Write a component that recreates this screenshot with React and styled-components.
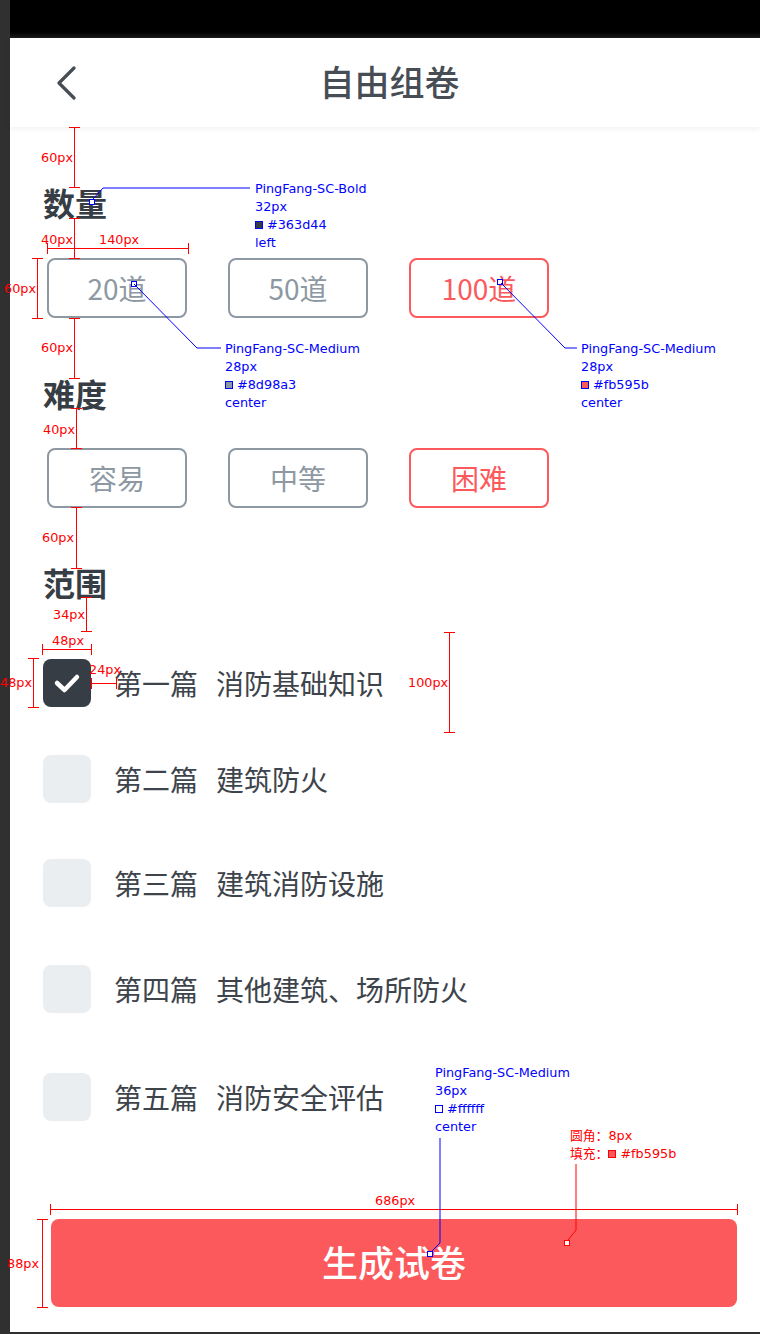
import React from "react";
import styled, { createGlobalStyle } from "styled-components";

const GlobalStyle = createGlobalStyle`
  body {
    margin: 0;
    background: #303030;
  }
  * { box-sizing: border-box; }
`;

const Frame = styled.div`
  position: relative;
  width: 760px;
  height: 1334px;
  display: flex;
  padding: 0 0 2px 10px;
  background: #303030;
  font-family: "Noto Sans CJK SC", "Noto Sans", sans-serif;
  overflow: hidden;
`;

const Page = styled.div`
  flex: 1;
  display: flex;
  flex-direction: column;
  background: #ffffff;
`;

const StatusBar = styled.div`
  height: 38px;
  background: linear-gradient(#000 0, #000 32px, #1c1c1c 38px);
`;

const Header = styled.div`
  position: relative;
  z-index: 1;
  height: 89px;
  display: grid;
  grid-template-columns: 1fr auto 1fr;
  align-items: center;
  padding: 0 46px;
  background: #fff;
  box-shadow: 0 2px 6px rgba(0, 0, 0, 0.06);
`;

const Title = styled.div`
  margin: 0 0 4px 9px;
  font-size: 35px;
  font-weight: 500;
  color: #474d55;
  line-height: 1;
`;

const Content = styled.div`
  display: flex;
  flex-direction: column;
  padding-left: 33px;
`;

const SectionTitle = styled.div`
  margin-top: ${(p) => p.$top}px;
  font-size: 32px;
  line-height: 32px;
  font-weight: 700;
  color: #363d44;
`;

const OptionRow = styled.div`
  display: flex;
  gap: 41px;
  margin: ${(p) => p.$top}px 0 0 4px;
`;

const Option = styled.div`
  width: 140px;
  height: 60px;
  display: flex;
  align-items: center;
  justify-content: center;
  border: 2px solid ${(p) => (p.$active ? "#fb595b" : "#8d98a3")};
  border-radius: 8px;
  color: ${(p) => (p.$active ? "#fb595b" : "#8d98a3")};
  font-size: 28px;
`;

const ScopeItem = styled.div`
  display: flex;
  align-items: center;
  gap: 23px;
  margin-top: ${(p) => p.$gap}px;
`;

const CheckBox = styled.div`
  width: 48px;
  height: 48px;
  flex: none;
  border-radius: 8px;
  background: ${(p) => (p.$checked ? "#363d44" : "#ebeef1")};
  display: flex;
  align-items: center;
  justify-content: center;
`;

const ScopeText = styled.div`
  font-size: 28px;
  line-height: 48px;
  color: #3d444b;
  span {
    margin-left: 18px;
  }
`;

const Submit = styled.button`
  margin: 98px 0 0 8px;
  width: 686px;
  height: 88px;
  padding: 0 0 4px;
  border: none;
  border-radius: 8px;
  background: #fb595b;
  color: #ffffff;
  font-family: inherit;
  font-size: 36px;
  font-weight: 500;
`;

/* design annotation layer */
const Overlay = styled.div`
  position: absolute;
  inset: 0;
  pointer-events: none;
`;

const Lines = styled.svg`
  position: absolute;
  left: 0;
  top: 0;
`;

const Note = styled.div`
  position: absolute;
  left: ${(p) => p.$x}px;
  top: ${(p) => p.$y}px;
  font-family: "DejaVu Sans", "Noto Sans CJK SC", sans-serif;
  font-size: 12.8px;
  line-height: 18px;
  color: ${(p) => p.$color};
  white-space: nowrap;
`;

const Swatch = styled.i`
  display: inline-block;
  width: 8px;
  height: 8px;
  margin-right: 4px;
  vertical-align: 0;
  background: ${(p) => p.$fill};
  border: 1px solid ${(p) => p.$edge};
`;

const RED = "#ff0000";
const BLUE = "#0000ff";

const counts = ["20道", "50道", "100道"];
const levels = ["容易", "中等", "困难"];

const scopes = [
  { id: 1, part: "第一篇", name: "消防基础知识", gap: 61, checked: true },
  { id: 2, part: "第二篇", name: "建筑防火", gap: 48 },
  { id: 3, part: "第三篇", name: "建筑消防设施", gap: 56 },
  { id: 4, part: "第四篇", name: "其他建筑、场所防火", gap: 58 },
  { id: 5, part: "第五篇", name: "消防安全评估", gap: 60 },
];

const vMeasures = [
  [74, 127, 187],
  [74, 218, 258],
  [37, 258, 318],
  [74, 318, 378],
  [76, 408, 448],
  [76, 507, 568],
  [86, 597, 631],
  [33, 658, 707],
  [449, 632, 732],
  [42, 1219, 1307],
];

const hMeasures = [
  [248, 47, 188],
  [649, 42, 91],
  [683, 91, 116],
  [1209, 50, 737],
];

const sizeLabels = [
  ["60px", 41, 158],
  ["40px", 41, 240],
  ["140px", 99, 240],
  ["60px", 4, 289],
  ["60px", 41, 348],
  ["40px", 43, 430],
  ["60px", 42, 538],
  ["34px", 53, 615],
  ["48px", 52, 641],
  ["48px", 0, 683],
  ["24px", 89, 670],
  ["100px", 408, 683],
  ["686px", 375, 1201],
  ["88px", 7, 1264],
];

const leaders = [
  { color: BLUE, box: [89, 199], pts: "93,199 103,188 250,188" },
  { color: BLUE, box: [131, 281], pts: "134,284 197,348 221,348" },
  { color: BLUE, box: [497, 279], pts: "501,283 565,348 577,348" },
  { color: BLUE, box: [427, 1251], pts: "432,1251 440,1243 440,1138" },
  { color: RED, box: [564, 1240], pts: "568,1240 576,1230 576,1164" },
];

const specs = [
  { x: 255, y: 180, font: "PingFang-SC-Bold", size: "32px", fill: "#363d44", value: "#363d44", align: "left" },
  { x: 225, y: 340, font: "PingFang-SC-Medium", size: "28px", fill: "#8d98a3", value: "#8d98a3", align: "center" },
  { x: 581, y: 340, font: "PingFang-SC-Medium", size: "28px", fill: "#fb595b", value: "#fb595b", align: "center" },
  { x: 435, y: 1064, font: "PingFang-SC-Medium", size: "36px", fill: "#ffffff", value: "#ffffff", align: "center" },
];

function Annotations() {
  return (
    <Overlay>
      <Lines width="760" height="1334" viewBox="0 0 760 1334">
        <g stroke={RED} strokeWidth="1" fill="none">
          {vMeasures.map(([x, y1, y2], i) => (
            <g key={"v" + i}>
              <line x1={x + 0.5} y1={y1} x2={x + 0.5} y2={y2} />
              <line x1={x - 5} y1={y1 + 0.5} x2={x + 6} y2={y1 + 0.5} />
              <line x1={x - 5} y1={y2 + 0.5} x2={x + 6} y2={y2 + 0.5} />
            </g>
          ))}
          {hMeasures.map(([y, x1, x2], i) => (
            <g key={"h" + i}>
              <line x1={x1} y1={y + 0.5} x2={x2} y2={y + 0.5} />
              <line x1={x1 + 0.5} y1={y - 5} x2={x1 + 0.5} y2={y + 6} />
              <line x1={x2 + 0.5} y1={y - 5} x2={x2 + 0.5} y2={y + 6} />
            </g>
          ))}
        </g>
        {leaders.map((l, i) => (
          <g key={"l" + i} stroke={l.color} strokeWidth="1" fill="none">
            <rect x={l.box[0] + 0.5} y={l.box[1] + 0.5} width="5" height="5" fill="#fff" />
            <polyline points={l.pts} />
          </g>
        ))}
      </Lines>

      {sizeLabels.map(([text, x, y], i) => (
        <Note key={"s" + i} $x={x} $y={y - 9} $color={RED}>
          {text}
        </Note>
      ))}

      {specs.map((s) => (
        <Note key={s.x} $x={s.x} $y={s.y} $color={BLUE}>
          <div>{s.font}</div>
          <div>{s.size}</div>
          <div>
            <Swatch $fill={s.fill} $edge={BLUE} />
            {s.value}
          </div>
          <div>{s.align}</div>
        </Note>
      ))}

      <Note $x={570} $y={1127} $color={RED}>
        <div>圆角：8px</div>
        <div>
          填充：
          <Swatch $fill="#fb595b" $edge={RED} />
          #fb595b
        </div>
      </Note>
    </Overlay>
  );
}

function BackIcon() {
  return (
    <svg width="24" height="34" viewBox="0 0 24 34">
      <polyline
        points="18,2 3,17 18,32"
        fill="none"
        stroke="#474d55"
        strokeWidth="3.2"
        strokeLinecap="round"
        strokeLinejoin="round"
      />
    </svg>
  );
}

function CheckIcon() {
  return (
    <svg width="48" height="48" viewBox="0 0 48 48">
      <polyline
        points="14,24 21.5,31 34,18"
        fill="none"
        stroke="#ffffff"
        strokeWidth="4.5"
        strokeLinecap="round"
        strokeLinejoin="round"
      />
    </svg>
  );
}

export default function App() {
  return (
    <>
      <GlobalStyle />
      <Frame>
        <Page>
          <StatusBar />
          <Header>
            <BackIcon />
            <Title>自由组卷</Title>
            <div />
          </Header>
          <Content>
            <SectionTitle $top={59}>数量</SectionTitle>
            <OptionRow $top={40}>
              {counts.map((c, i) => (
                <Option key={c} $active={i === 2}>{c}</Option>
              ))}
            </OptionRow>

            <SectionTitle $top={59}>难度</SectionTitle>
            <OptionRow $top={39}>
              {levels.map((c, i) => (
                <Option key={c} $active={i === 2}>{c}</Option>
              ))}
            </OptionRow>

            <SectionTitle $top={58}>范围</SectionTitle>
            {scopes.map((s) => (
              <ScopeItem key={s.id} $gap={s.gap}>
                <CheckBox $checked={s.checked}>{s.checked && <CheckIcon />}</CheckBox>
                <ScopeText>
                  {s.part}
                  <span>{s.name}</span>
                </ScopeText>
              </ScopeItem>
            ))}

            <Submit>生成试卷</Submit>
          </Content>
        </Page>
        <Annotations />
      </Frame>
    </>
  );
}
